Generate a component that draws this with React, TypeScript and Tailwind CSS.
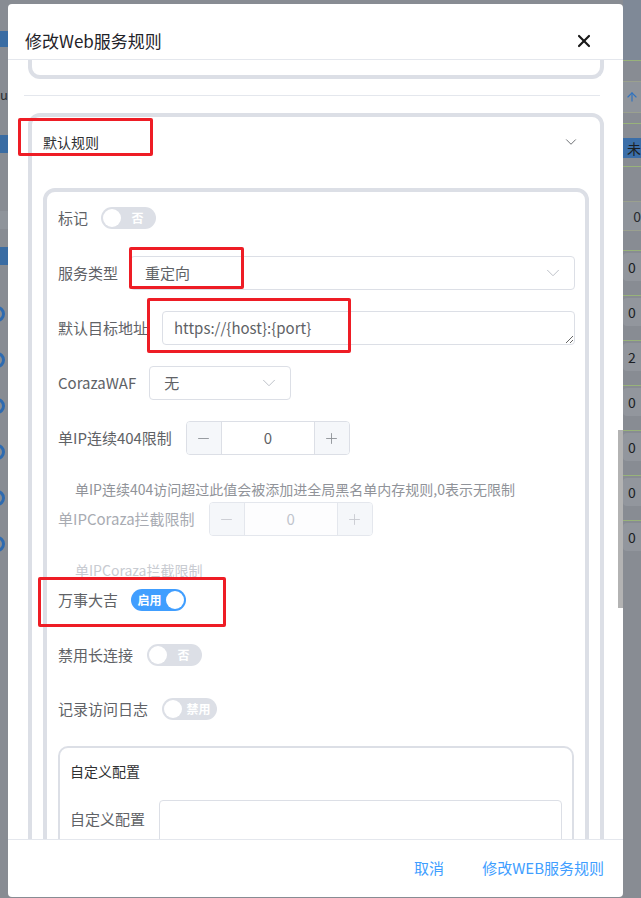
import { ChevronDown, Minus, Plus, X, ArrowUp } from 'lucide-react'

const label = 'shrink-0 text-[15px] leading-[22px] text-[#606266]'

const Switch = ({ on, text }: { on?: boolean; text: string }) => {
  if (on) {
    return (
      <span className="flex h-[22px] w-[55px] shrink-0 items-center rounded-full bg-[#409eff] p-[2px]">
        <span className="flex-1 text-center text-[12px] font-bold leading-none text-white">{text}</span>
        <span className="h-[18px] w-[18px] rounded-full bg-white" />
      </span>
    )
  }
  return (
    <span className="flex h-[22px] w-[55px] shrink-0 items-center rounded-full bg-[#dcdfe6] p-[2px]">
      <span className="h-[18px] w-[18px] rounded-full bg-white" />
      <span className="flex-1 text-center text-[12px] font-bold leading-none text-white">{text}</span>
    </span>
  )
}

const Select = ({ value, className }: { value: string; className: string }) => (
  <div
    className={`flex h-[34px] items-center justify-between rounded-[4px] border border-[#dcdfe6] bg-white pl-[14px] pr-[10px] text-[15px] text-[#606266] ${className}`}
  >
    <span>{value}</span>
    <ChevronDown size={22} strokeWidth={1} className="text-[#b8bcc4]" />
  </div>
)

const NumberInput = ({ disabled }: { disabled?: boolean }) => {
  const side = disabled
    ? 'flex w-[35px] items-center justify-center bg-[#f5f7fa] text-[#c8cbd1] border-[#e4e7ed]'
    : 'flex w-[35px] items-center justify-center bg-[#f5f7fa] text-[#8f9399] border-[#dcdfe6]'
  return (
    <div
      className={`flex h-[34px] w-[164px] shrink-0 overflow-hidden rounded-[4px] border ${
        disabled ? 'border-[#e4e7ed]' : 'border-[#dcdfe6]'
      }`}
    >
      <span className={`${side} border-r`}>
        <Minus size={17} strokeWidth={1.3} />
      </span>
      <span
        className={`flex flex-1 items-center justify-center text-[15px] ${
          disabled ? 'bg-[#fdfdfe] text-[#c0c4cc]' : 'bg-white text-[#606266]'
        }`}
      >
        0
      </span>
      <span className={`${side} border-l`}>
        <Plus size={17} strokeWidth={1.3} />
      </span>
    </div>
  )
}

const RedBox = ({ className }: { className: string }) => (
  <div className={`pointer-events-none absolute rounded-[2px] border-[3px] border-[#ee1d25] ${className}`} />
)

const LeftStrip = () => (
  <div className="flex w-[8px] shrink-0 flex-col overflow-hidden">
    <div className="h-[31px]" />
    <div className="h-[16px] bg-[#3a6ca3]" />
    <div className="mt-[40px] h-[16px] text-[13px] leading-[16px] text-[#2a2d31]">ul</div>
    <div className="mt-[32px] h-[18px] bg-[#3a6ca3]" />
    <div className="mt-[58px] h-[18px] bg-[#8f949b]" />
    <div className="mt-[18px] h-[18px] bg-[#3a6ca3]" />
    {[0, 1, 2, 3, 4, 5].map((i) => (
      <div
        key={i}
        className={`${i === 0 ? 'mt-[41px]' : 'mt-[30px]'} h-[16px] w-[16px] shrink-0 -translate-x-[11px] rounded-full border-[3px] border-[#2f6bb0]`}
      />
    ))}
  </div>
)

const RightStrip = () => (
  <div className="flex w-[18px] shrink-0 flex-col">
    <div className="h-[60px] bg-[#7f8997]" />
    <div className="h-px bg-[#98b27a]" />
    <div className="mt-[20px] flex h-[32px] items-center justify-end border-y border-[#9aa08f] bg-[#8f949b] pr-[2px]">
      <ArrowUp size={14} strokeWidth={2} className="text-[#2f73c0]" />
    </div>
    <div className="mt-[10px] h-px bg-[#98b27a]" />
    <div className="mt-[14px] flex h-[20px] items-center bg-[#3b6ea8] pl-[4px] text-[14px] text-[#1c1f24]">未</div>
    <div className="mt-[8px] h-px bg-[#98b27a]" />
    <div className="mt-[34px] flex h-[30px] items-center justify-end border-y border-[#9aa08f] bg-[#8f949b] text-[14px] text-[#2a2d31]">
      0
    </div>
    {['0', '0', '2', '0', '0', '0', '0'].map((n, i) => (
      <div key={i} className={`${i === 0 ? 'mt-[19px]' : 'mt-[12px]'} flex h-[33px] flex-col`}>
        <div className="h-px bg-[#98b27a]" />
        <div className="mt-[2px] flex h-[28px] items-center rounded-l-[4px] bg-[#92969d] pl-[5px] text-[14px] text-[#1c1f24]">
          {n}
        </div>
      </div>
    ))}
  </div>
)

export default function App() {
  return (
    <div className="relative flex h-[898px] w-[641px] overflow-hidden bg-[#888c93] font-['Noto_Sans_CJK_SC','Noto_Sans',sans-serif]">
      <LeftStrip />
      <div className="flex-1" />
      <RightStrip />

      <div className="absolute left-[8px] top-[4px] flex h-[893px] w-[615px] flex-col overflow-hidden rounded-[4px] bg-white">
        <div className="flex shrink-0 items-center justify-between border-b border-[#e4e7ed] pb-[6px] pl-[17px] pr-[29px] pt-[25px]">
          <span className="text-[17px] leading-[24px] text-[#1f2329]">修改Web服务规则</span>
          <X size={20} strokeWidth={2.6} className="text-[#1a1a1a]" />
        </div>

        <div className="relative min-h-0 flex-1 overflow-hidden pl-[20px] pr-[19px]">
          <div className="h-[19px] rounded-b-[12px] border-x-4 border-b-4 border-[#dcdfe6]" />
          <div className="ml-[-4px] mr-[4px] mt-[16px] h-px bg-[#e4e7ed]" />

          <div className="mt-[17px] rounded-[12px] border-4 border-[#dcdfe6]">
            <div className="flex h-[50px] items-center justify-between pl-[11px] pr-[20px]">
              <span className="text-[14px] text-[#303133]">默认规则</span>
              <ChevronDown size={18} strokeWidth={1.2} className="text-[#606266]" />
            </div>

            <div className="mx-[11px] mt-[21px] rounded-[12px] border-4 border-[#dcdfe6] pb-[40px] pl-[11px] pr-[10px] pt-[9px]">
              <div className="flex h-[34px] items-center gap-[13px]">
                <span className={label}>标记</span>
                <Switch text="否" />
              </div>

              <div className="mt-[21px] flex h-[34px] items-center gap-[12px]">
                <span className={label}>服务类型</span>
                <Select value="重定向" className="flex-1" />
              </div>

              <div className="mt-[21px] flex h-[34px] items-center gap-[14px]">
                <span className={label}>默认目标地址</span>
                <textarea
                  readOnly
                  defaultValue="https://{host}:{port}"
                  className="h-[34px] min-w-0 flex-1 rounded-[4px] border border-[#dcdfe6] px-[11px] py-[5px] text-[15px] leading-[22px] text-[#606266] outline-none"
                />
              </div>

              <div className="mt-[21px] flex h-[34px] items-center gap-[13px]">
                <span className={label}>CorazaWAF</span>
                <Select value="无" className="w-[142px]" />
              </div>

              <div className="mt-[21px] flex h-[34px] items-center gap-[14px]">
                <span className={label}>单IP连续404限制</span>
                <NumberInput />
              </div>
              <div className="mt-[25px] pl-[17px] text-[14px] leading-[18px] text-[#909399]">
                单IP连续404访问超过此值会被添加进全局黑名单内存规则,0表示无限制
              </div>

              <div className="mt-[4px] flex h-[34px] items-center gap-[14px]">
                <span className="shrink-0 text-[15px] leading-[22px] text-[#a8abb2]">单IPCoraza拦截限制</span>
                <NumberInput disabled />
              </div>
              <div className="mt-[25px] pl-[17px] text-[14px] leading-[18px] text-[#c8cbd1]">单IPCoraza拦截限制</div>

              <div className="mt-[4px] flex h-[34px] items-center gap-[13px]">
                <span className={label}>万事大吉</span>
                <Switch on text="启用" />
              </div>

              <div className="mt-[21px] flex h-[34px] items-center gap-[14px]">
                <span className={label}>禁用长连接</span>
                <Switch text="否" />
              </div>

              <div className="mt-[20px] flex h-[34px] items-center gap-[14px]">
                <span className={label}>记录访问日志</span>
                <Switch text="禁用" />
              </div>

              <div className="mr-[1px] mt-[20px] rounded-[10px] border-2 border-[#dcdfe6] px-[10px] pb-[20px]">
                <div className="flex h-[46px] items-center text-[14px] text-[#303133]">自定义配置</div>
                <div className="mt-[6px] flex items-start gap-[14px]">
                  <span className={`${label} mt-[8px]`}>自定义配置</span>
                  <textarea
                    readOnly
                    className="h-[70px] min-w-0 flex-1 rounded-[4px] border border-[#dcdfe6] px-[11px] py-[5px] outline-none"
                  />
                </div>
              </div>
            </div>
          </div>

          <div className="absolute right-0 top-[370px] h-[178px] w-[5px] bg-[#b3b3b3]" />
        </div>

        <div className="flex h-[58px] shrink-0 items-center justify-end gap-[38px] border-t border-[#e4e7ed] pr-[19px] text-[15px] text-[#409eff]">
          <span>取消</span>
          <span>修改WEB服务规则</span>
        </div>
      </div>

      <RedBox className="left-[18px] top-[118px] h-[38px] w-[135px]" />
      <RedBox className="left-[129px] top-[247px] h-[42px] w-[115px]" />
      <RedBox className="left-[147px] top-[298px] h-[55px] w-[204px]" />
      <RedBox className="left-[38px] top-[577px] h-[50px] w-[188px]" />
    </div>
  )
}
